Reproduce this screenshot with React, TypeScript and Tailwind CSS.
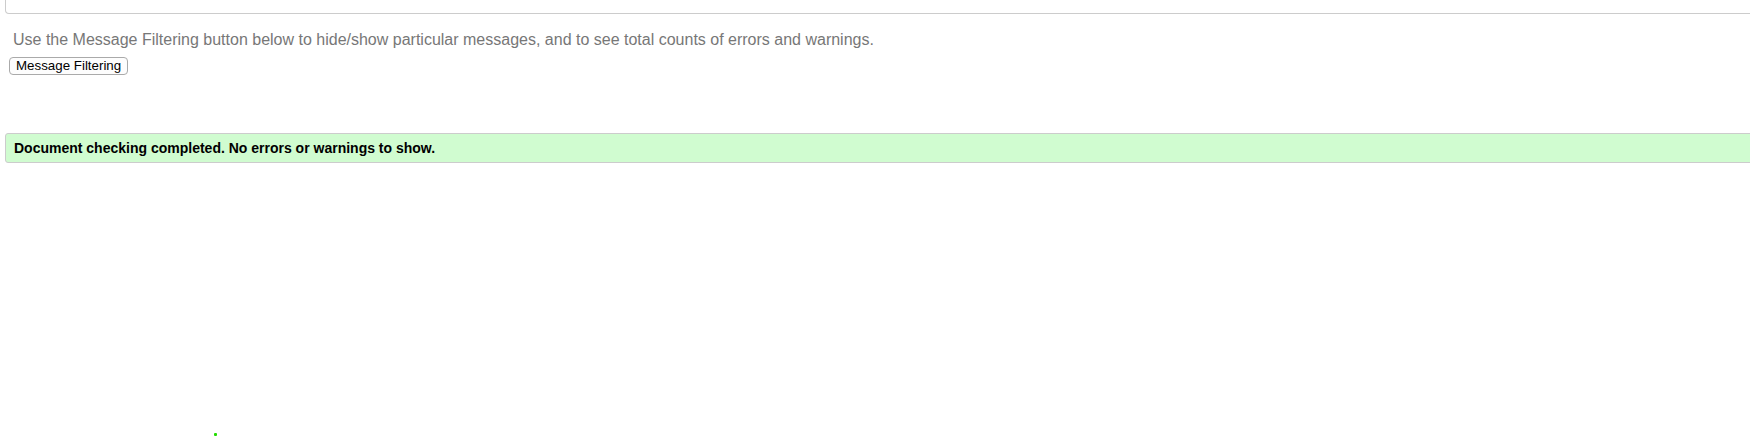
export default function App() {
  return (
    <div className="w-[1750px] h-[438px] overflow-hidden bg-white font-['Liberation_Sans',Arial,sans-serif] relative">
      <div className="ml-[5px] w-[1800px] h-[14px] border border-t-0 border-[#ccc] rounded-b-[4px]" />

      <p className="mt-[17px] ml-[13px] text-[16px] leading-[18px] text-[#777]">
        Use the Message Filtering button below to hide/show particular messages, and to see total counts of errors and warnings.
      </p>

      <button className="mt-[8px] ml-[9px] block h-[18px] px-[6px] border border-[#aaa] rounded-[4px] bg-[#fdfdfd] text-[13.33px] leading-[14px] text-black">
        Message Filtering
      </button>

      <div className="mt-[58px] ml-[5px] w-[1800px] h-[30px] flex items-center pl-[8px] pt-[1px] border border-[#ccc] rounded-[3px] bg-[#d0fcd0]">
        <span className="text-[14px] font-bold text-black">
          Document checking completed. No errors or warnings to show.
        </span>
      </div>

      {/* stray status dot */}
      <div className="absolute left-[214px] top-[433px] w-[3px] h-[3px] rounded-[1px] bg-[#22dd00]" />
    </div>
  );
}
